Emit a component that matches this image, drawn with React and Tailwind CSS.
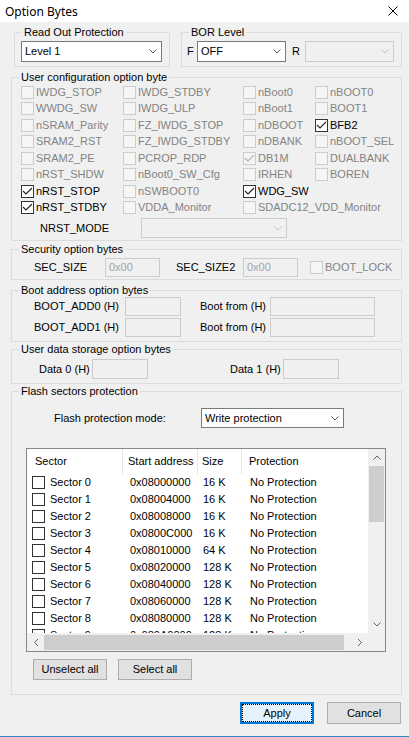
import React from "react";

const DIM = "text-[#838383]";

// only the rows that fit above the horizontal scrollbar are rendered
const sectors = [
  ["Sector 0", "0x08000000", "16 K"],
  ["Sector 1", "0x08004000", "16 K"],
  ["Sector 2", "0x08008000", "16 K"],
  ["Sector 3", "0x0800C000", "16 K"],
  ["Sector 4", "0x08010000", "64 K"],
  ["Sector 5", "0x08020000", "128 K"],
  ["Sector 6", "0x08040000", "128 K"],
  ["Sector 7", "0x08060000", "128 K"],
  ["Sector 8", "0x08080000", "128 K"],
  ["Sector 9", "0x080A0000", "128 K"],
];

// user configuration bits, row by row (4 columns)
const userBits = [
  [{ label: "IWDG_STOP" }, { label: "IWDG_STDBY" }, { label: "nBoot0" }, { label: "nBOOT0" }],
  [{ label: "WWDG_SW" }, { label: "IWDG_ULP" }, { label: "nBoot1" }, { label: "BOOT1" }],
  [{ label: "nSRAM_Parity" }, { label: "FZ_IWDG_STOP" }, { label: "nDBOOT" }, { label: "BFB2", checked: true, enabled: true }],
  [{ label: "SRAM2_RST" }, { label: "FZ_IWDG_STDBY" }, { label: "nDBANK" }, { label: "nBOOT_SEL" }],
  [{ label: "SRAM2_PE" }, { label: "PCROP_RDP" }, { label: "DB1M", checked: true }, { label: "DUALBANK" }],
  [{ label: "nRST_SHDW" }, { label: "nBoot0_SW_Cfg" }, { label: "IRHEN" }, { label: "BOREN" }],
  [{ label: "nRST_STOP", checked: true, enabled: true }, { label: "nSWBOOT0" }, { label: "WDG_SW", checked: true, enabled: true }, null],
  [{ label: "nRST_STDBY", checked: true, enabled: true }, { label: "VDDA_Monitor" }, { label: "SDADC12_VDD_Monitor", span: true }],
];

function Box({ checked, enabled }) {
  return (
    <span
      className={`flex h-[13px] w-[13px] shrink-0 items-center justify-center border ${
        enabled ? "border-[#333333] bg-white" : "border-[#cccccc] bg-[#f5f5f5]"
      }`}
    >
      {checked && (
        <svg width="11" height="11" viewBox="0 0 11 11">
          <polyline points="1,5 4,8 10,2" fill="none" stroke={enabled ? "#222" : "#b5b5b5"} strokeWidth="1.1" />
        </svg>
      )}
    </span>
  );
}

function Opt({ label, checked, enabled, span }) {
  return (
    <div className={`flex items-center gap-[2px] ${span ? "col-span-2" : ""}`}>
      <Box checked={checked} enabled={enabled} />
      <span className={enabled ? "text-black" : DIM}>{label}</span>
    </div>
  );
}

function Chevron({ color, className = "" }) {
  return (
    <svg className={className} width="8" height="5" viewBox="0 0 8 5">
      <polyline points="0.5,0.5 4,4 7.5,0.5" fill="none" stroke={color} />
    </svg>
  );
}

function Combo({ value, disabled, className = "" }) {
  return (
    <div
      className={`flex items-center border ${
        disabled ? "border-[#cccccc] bg-[#f0f0f0]" : "border-[#7a7a7a] bg-white"
      } ${className}`}
    >
      <span className="flex-1 truncate pl-[3px]">{value}</span>
      <Chevron className="mr-[4px]" color={disabled ? "#c4c4c4" : "#555"} />
    </div>
  );
}

function Field({ value, className = "" }) {
  return (
    <div className={`flex items-center border border-[#cccccc] bg-[#f0f0f0] pl-[3px] text-[#a3a3a3] ${className}`}>
      {value}
    </div>
  );
}

function Group({ title, className = "", children }) {
  return (
    <fieldset className={`border border-[#dcdcdc] ${className}`}>
      <legend className="ml-[7px] px-[2px] leading-[13px]">{title}</legend>
      {children}
    </fieldset>
  );
}

function Button({ children, focused, className = "" }) {
  if (focused) {
    return (
      <div className={`flex border-2 border-[#0078d7] bg-[#e5f1fb] p-[1px] ${className}`}>
        <span className="flex flex-1 items-center justify-center outline-1 outline-dotted outline-black">
          {children}
        </span>
      </div>
    );
  }
  return (
    <div className={`flex items-center justify-center border border-[#adadad] bg-[#e1e1e1] ${className}`}>
      {children}
    </div>
  );
}

function SectorTable() {
  return (
    <div className="ml-[14px] mt-[20px] flex h-[204px] w-[360px] flex-col border border-[#828790] bg-white">
      <div className="flex h-[184px]">
        <div className="flex flex-1 flex-col overflow-hidden">
          <div className="flex h-[25px] shrink-0 items-stretch">
            <div className="flex w-[96px] items-center border-r border-[#e5e5e5] pl-[8px]">Sector</div>
            <div className="flex w-[75px] items-center border-r border-[#e5e5e5] pl-[5px]">Start address</div>
            <div className="flex w-[44px] items-center border-r border-[#e5e5e5] pl-[4px]">Size</div>
            <div className="flex flex-1 items-center pl-[7px]">Protection</div>
          </div>
          {sectors.map(([name, addr, size]) => (
            <div key={name} className="flex h-[17px] shrink-0 items-center">
              <div className="flex w-[96px] items-center gap-[5px] pl-[5px]">
                <Box enabled />
                <span>{name}</span>
              </div>
              <div className="w-[75px] pl-[7px]">{addr}</div>
              <div className="w-[44px] pl-[5px]">{size}</div>
              <div className="flex-1 pl-[8px]">No Protection</div>
            </div>
          ))}
        </div>
        <div className="flex w-[17px] flex-col bg-[#f0f0f0]">
          <div className="flex h-[17px] items-center justify-center">
            <Chevron className="rotate-180" color="#606060" />
          </div>
          <div className="mx-[1px] h-[56px] bg-[#cdcdcd]" />
          <div className="flex-1" />
          <div className="flex h-[17px] items-center justify-center">
            <Chevron color="#606060" />
          </div>
        </div>
      </div>
      <div className="flex h-[17px] flex-1">
        <div className="flex flex-1 items-center bg-[#f0f0f0]">
          <div className="flex w-[17px] items-center justify-center">
            <Chevron className="rotate-90" color="#606060" />
          </div>
          <div className="my-[1px] h-[15px] w-[300px] bg-[#cdcdcd]" />
          <div className="flex-1" />
          <div className="flex w-[17px] items-center justify-center">
            <Chevron className="-rotate-90" color="#606060" />
          </div>
        </div>
        <div className="w-[17px] bg-[#f0f0f0]" />
      </div>
    </div>
  );
}

export default function App() {
  return (
    <div className="flex h-[737px] w-[409px] flex-col bg-[#f0f0f0] font-['Liberation_Sans',Arial,sans-serif] text-[11px] leading-[13px] text-black">
      <div className="flex h-[22px] shrink-0 items-center justify-between bg-white pl-[5px] pr-[11px]">
        <span className="font-['Noto_Sans',sans-serif] text-[12px]">Option Bytes</span>
        <svg width="10" height="10" viewBox="0 0 10 10">
          <path d="M0.5 0.5 L9.5 9.5 M9.5 0.5 L0.5 9.5" stroke="#000" />
        </svg>
      </div>

      <div className="flex flex-1">
        <div className="flex w-px flex-col">
          <div className="flex-1 bg-[#6f6f6f]" />
          <div className="h-[73px] bg-[#2a86c2]" />
        </div>

        <div className="flex flex-1 flex-col pl-[11px] pr-[8px]">
          {/* read out protection + BOR */}
          <div className="mt-[4px] flex gap-[11px] pl-[3px]">
            <Group title="Read Out Protection" className="w-[156px] pb-[4px]">
              <Combo value="Level 1" className="ml-[6px] mt-[2px] h-[21px] w-[141px]" />
            </Group>
            <Group title="BOR Level" className="w-[221px] pb-[4px]">
              <div className="mt-[2px] flex h-[21px] items-center pl-[5px]">
                <span className="w-[10px]">F</span>
                <Combo value="OFF" className="h-[21px] w-[89px]" />
                <span className="ml-[6px] w-[13px]">R</span>
                <Combo disabled className="h-[21px] w-[89px]" />
              </div>
            </Group>
          </div>

          {/* user configuration */}
          <Group title="User configuration option byte" className="mt-[4px] pb-[2px]">
            <div className="grid auto-rows-[16.5px] grid-cols-[102px_120px_72px_1fr] pl-[9px]">
              {userBits.flatMap((row, r) =>
                row.map((bit, c) => (bit ? <Opt key={`${r}-${c}`} {...bit} /> : <div key={`${r}-${c}`} />))
              )}
            </div>
            <div className="mt-[2px] flex h-[20px] items-center pl-[28px]">
              <span className="w-[101px]">NRST_MODE</span>
              <Combo disabled className="h-[20px] w-[146px]" />
            </div>
          </Group>

          {/* security */}
          <Group title="Security option bytes" className="mt-[2px] pb-[2px]">
            <div className="mt-[2px] flex h-[19px] items-center pl-[22px]">
              <span className="w-[71px]">SEC_SIZE</span>
              <Field value="0x00" className="h-[19px] w-[55px]" />
              <span className="ml-[16px] w-[67px]">SEC_SIZE2</span>
              <Field value="0x00" className="h-[19px] w-[55px]" />
              <div className="ml-[12px]">
                <Opt label="BOOT_LOCK" />
              </div>
            </div>
          </Group>

          {/* boot address */}
          <Group title="Boot address option bytes" className="mt-[4px] pb-[4px]">
            <div className="flex flex-col gap-[2px]">
              {["BOOT_ADD0 (H)", "BOOT_ADD1 (H)"].map((name) => (
                <div key={name} className="flex h-[19px] items-center pl-[22px]">
                  <span className="w-[91px]">{name}</span>
                  <Field className="h-[19px] w-[56px]" />
                  <span className="ml-[19px] w-[70px]">Boot from (H)</span>
                  <Field className="h-[19px] w-[105px]" />
                </div>
              ))}
            </div>
          </Group>

          {/* user data */}
          <Group title="User data storage option bytes" className="mt-[1px] pb-[4px]">
            <div className="mt-[3px] flex h-[20px] items-center pl-[27px]">
              <span className="w-[53px]">Data 0 (H)</span>
              <Field className="h-[20px] w-[56px]" />
              <span className="ml-[82px] w-[53px]">Data 1 (H)</span>
              <Field className="h-[20px] w-[56px]" />
            </div>
          </Group>

          {/* flash sectors */}
          <Group title="Flash sectors protection" className="mt-[1px] pb-[14px]">
            <div className="mt-[10px] flex h-[20px] items-center pl-[42px]">
              <span className="w-[147px]">Flash protection mode:</span>
              <Combo value="Write protection" className="h-[20px] w-[143px]" />
            </div>
            <SectorTable />
            <div className="ml-[21px] mt-[7px] flex gap-[11px]">
              <Button className="h-[21px] w-[74px]">Unselect all</Button>
              <Button className="h-[21px] w-[74px]">Select all</Button>
            </div>
          </Group>

          <div className="mr-[1px] mt-[7px] flex justify-end gap-[13px]">
            <Button focused className="h-[22px] w-[74px]">Apply</Button>
            <Button className="h-[22px] w-[74px]">Cancel</Button>
          </div>
        </div>

        <div className="flex w-px flex-col">
          <div className="flex-1 bg-[#6f6f6f]" />
          <div className="h-[91px] bg-[#2a86c2]" />
        </div>
      </div>
      <div className="h-px shrink-0 bg-[#2a86c2]" />
    </div>
  );
}
